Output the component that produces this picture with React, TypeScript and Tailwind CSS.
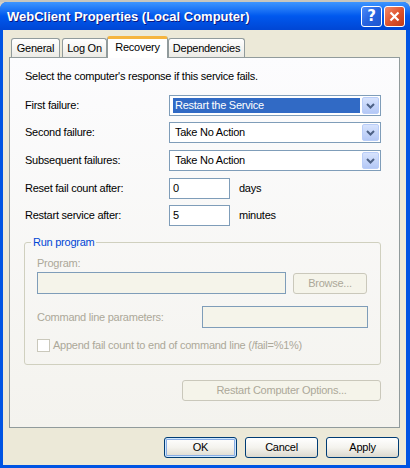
import React from "react";

function Chevron() {
  return (
    <svg width="9" height="6" viewBox="0 0 9 6">
      <path d="M1 1 L4.5 4.5 L8 1" fill="none" stroke="#4D6185" strokeWidth="2" />
    </svg>
  );
}

function Combo({ value, selected }: { value: string; selected?: boolean }) {
  return (
    <div className="w-[212px] h-[21px] border border-[#7F9DB9] bg-white flex items-center p-[1px]">
      <div className="flex-1 h-full flex items-center pl-[2px]">
        <div
          className={
            selected
              ? "w-full h-[15px] bg-[#316AC5] text-white flex items-center pl-[2px]"
              : "w-full h-[15px] text-black flex items-center pl-[2px]"
          }
        >
          {value}
        </div>
      </div>
      <div className="w-[17px] h-[17px] ml-[2px] rounded-[2px] border border-[#B9CDF8] bg-gradient-to-b from-[#D7E3FD] to-[#B4C8F6] flex items-center justify-center">
        <Chevron />
      </div>
    </div>
  );
}

function XPButton({
  label,
  width,
  disabled,
  focused,
}: {
  label: string;
  width: string;
  disabled?: boolean;
  focused?: boolean;
}) {
  if (disabled) {
    return (
      <div
        className={`${width} h-[21px] rounded-[3px] border border-[#CAC8BB] bg-[#F5F4EA] text-[#ACA899] flex items-center justify-center`}
      >
        {label}
      </div>
    );
  }
  return (
    <div
      className={`${width} h-[21px] rounded-[3px] border border-[#003C74] bg-gradient-to-b from-white via-[#F4F3EE] to-[#DCD9CE] text-black flex items-center justify-center ${
        focused ? "shadow-[inset_0_0_0_1px_#CEE7FF,inset_0_0_0_2px_#89ADE4]" : ""
      }`}
    >
      {label}
    </div>
  );
}

export default function App() {
  return (
    <div className="w-[410px] h-[468px] bg-[#D4D0C8] flex flex-col font-['Liberation_Sans',Arial,sans-serif] text-[11px] leading-[13px] tracking-[-0.25px] text-black overflow-hidden">
      <div className="h-[2px] bg-[#C8C6BE]" />
      <div className="flex-1 flex flex-col rounded-t-[7px] overflow-hidden bg-[#0054E3]">
        {/* title bar */}
        <div className="h-[28px] flex items-center pl-[7px] pr-[5px] bg-gradient-to-b from-[#3D95FF] via-[#0058EE] to-[#0046D4]">
          <div className="flex-1 text-white font-bold text-[13px] tracking-normal [text-shadow:1px_1px_0_#0A1883]">
            WebClient Properties (Local Computer)
          </div>
          <div className="w-[21px] h-[21px] rounded-[3px] border border-white bg-gradient-to-br from-[#4C8CFB] via-[#2663E0] to-[#1F55CF] flex items-center justify-center text-white font-bold text-[15px] tracking-normal font-['DejaVu_Sans',sans-serif] mr-[2px]">
            ?
          </div>
          <div className="w-[21px] h-[21px] rounded-[3px] border border-white bg-gradient-to-br from-[#F08A6B] via-[#E0542E] to-[#C03A16] flex items-center justify-center">
            <svg width="11" height="11" viewBox="0 0 11 11">
              <path d="M1.5 1.5 L9.5 9.5 M9.5 1.5 L1.5 9.5" stroke="white" strokeWidth="2.2" />
            </svg>
          </div>
        </div>

        {/* client area */}
        <div className="flex-1 ml-[3px] mr-[4px] mb-[3px] bg-[#ECE9D8] pt-[6px] px-[6px] flex flex-col">
          {/* tabs */}
          <div className="flex items-end h-[21px] ml-[2px] relative z-10">
            <div className="w-[49px] h-[19px] mr-[2px] rounded-t-[3px] border border-b-0 border-[#919B9C] bg-gradient-to-b from-white to-[#ECEBE6] flex items-center justify-center">
              General
            </div>
            <div className="w-[45px] h-[19px] rounded-t-[3px] border border-b-0 border-[#919B9C] bg-gradient-to-b from-white to-[#ECEBE6] flex items-center justify-center">
              Log On
            </div>
            <div className="w-[61px] h-[22px] -mb-px rounded-t-[3px] border border-b-0 border-[#919B9C] border-t-[3px] border-t-[#F5B43F] bg-white flex items-start pt-[2px] justify-center">
              Recovery
            </div>
            <div className="w-[77px] h-[19px] rounded-t-[3px] border border-b-0 border-[#919B9C] bg-gradient-to-b from-white to-[#ECEBE6] flex items-center justify-center">
              Dependencies
            </div>
          </div>

          {/* panel */}
          <div className="h-[371px] border border-[#919B9C] bg-gradient-to-b from-[#FCFCFE] to-[#F4F3EE] pl-[15px] pt-[12px] flex flex-col">
            <div className="w-[356px] flex flex-col">
              <div>Select the computer's response if this service fails.</div>

              <div className="flex items-center mt-[12px]">
                <div className="w-[144px]">First failure:</div>
                <Combo value="Restart the Service" selected />
              </div>
              <div className="flex items-center mt-[6px]">
                <div className="w-[144px]">Second failure:</div>
                <Combo value="Take No Action" />
              </div>
              <div className="flex items-center mt-[7px]">
                <div className="w-[144px]">Subsequent failures:</div>
                <Combo value="Take No Action" />
              </div>
              <div className="flex items-center mt-[7px]">
                <div className="w-[144px]">Reset fail count after:</div>
                <div className="w-[61px] h-[21px] border border-[#7F9DB9] bg-white flex items-center pl-[3px]">0</div>
                <div className="ml-[9px]">days</div>
              </div>
              <div className="flex items-center mt-[6px]">
                <div className="w-[144px]">Restart service after:</div>
                <div className="w-[61px] h-[21px] border border-[#7F9DB9] bg-white flex items-center pl-[3px]">5</div>
                <div className="ml-[9px]">minutes</div>
              </div>

              <fieldset className="w-[357px] -ml-px mt-[10px] border border-[#D0D0BF] rounded-[3px] pl-[12px] pb-[12px]">
                <legend className="-ml-[6px] px-[2px] leading-[13px] text-[#0046D5]">Run program</legend>
                <div className="mt-[8px] text-[#ACA899]">Program:</div>
                <div className="flex items-center mt-[2px]">
                  <div className="w-[249px] h-[22px] border border-[#7F9DB9] bg-[#F5F4EA]" />
                  <div className="ml-[7px]">
                    <XPButton label="Browse..." width="w-[74px]" disabled />
                  </div>
                </div>
                <div className="flex items-center mt-[12px]">
                  <div className="w-[165px] text-[#ACA899]">Command line parameters:</div>
                  <div className="w-[166px] h-[22px] border border-[#7F9DB9] bg-[#F5F4EA]" />
                </div>
                <div className="flex items-center mt-[11px]">
                  <div className="w-[13px] h-[13px] border border-[#CAC8BB] bg-white" />
                  <div className="ml-[3px] text-[#ACA899]">Append fail count to end of command line (/fail=%1%)</div>
                </div>
              </fieldset>

              <div className="self-end mt-[15px]">
                <XPButton label="Restart Computer Options..." width="w-[199px]" disabled />
              </div>
            </div>
          </div>

          {/* bottom buttons */}
          <div className="flex justify-end gap-[8px] mt-[9px] pr-[1px]">
            <XPButton label="OK" width="w-[73px]" focused />
            <XPButton label="Cancel" width="w-[73px]" />
            <XPButton label="Apply" width="w-[73px]" />
          </div>
        </div>
      </div>
    </div>
  );
}
